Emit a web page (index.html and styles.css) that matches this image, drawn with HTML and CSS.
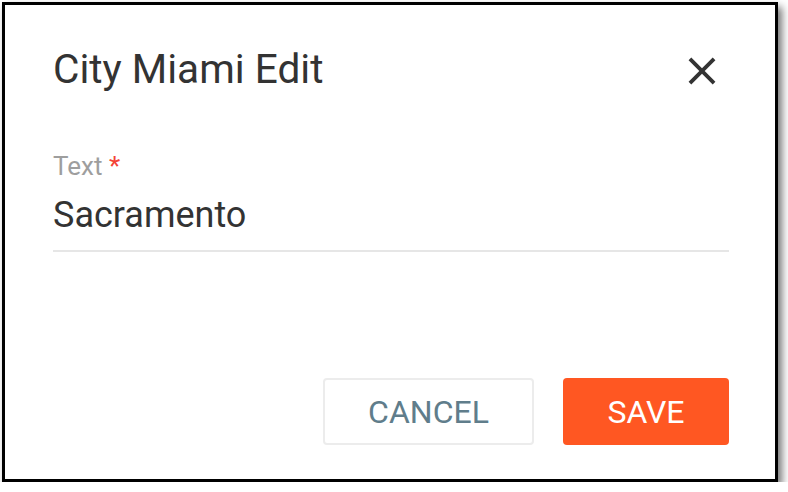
FILE: index.html
```html
<!DOCTYPE html>
<html lang="en">
<head>
<meta charset="utf-8">
<title>City Miami Edit</title>
<link rel="stylesheet" href="styles.css">
</head>
<body>
<div class="frame">
  <div class="header">
    <h2 class="title">City Miami Edit</h2>
    <button class="close" type="button" aria-label="Close">
      <svg viewBox="0 0 24 24" width="46" height="46"><path d="M19 6.41L17.59 5 12 10.59 6.41 5 5 6.41 10.59 12 5 17.59 6.41 19 12 13.41 17.59 19 19 17.59 13.41 12z"/></svg>
    </button>
  </div>
  <div class="body">
    <div class="field">
      <label class="label">Text <span class="req">*</span></label>
      <div class="input">Sacramento</div>
    </div>
    <div class="actions">
      <button class="btn btn-cancel" type="button">CANCEL</button>
      <button class="btn btn-save" type="button">SAVE</button>
    </div>
  </div>
</div>
</body>
</html>
```

FILE: styles.css
```css
html, body {
  margin: 0;
  padding: 0;
  background: #ffffff;
}
body {
  font-family: Roboto, "Liberation Sans", Arial, sans-serif;
}
.frame {
  box-sizing: border-box;
  margin: 2px 0 0 2px;
  width: 776px;
  height: 480px;
  border: 3px solid #000;
  background: #fff;
  box-shadow: 4px 5px 8px rgba(0, 0, 0, 0.55);
}
.header {
  display: flex;
  align-items: center;
  justify-content: space-between;
  margin-top: 39px;
  padding: 0 50px 0 48px;
}
.title {
  margin: 0;
  font-size: 40.6px;
  line-height: 48px;
  font-weight: 400;
  color: #333;
}
.close {
  display: flex;
  margin: 4px 0 0 0;
  padding: 0;
  border: 0;
  background: none;
}
.close svg {
  fill: #333;
}
.body {
  padding: 0 46px 0 48px;
}
.field {
  margin-top: 57px;
  display: flex;
  flex-direction: column;
}
.label {
  font-size: 26px;
  line-height: 30px;
  color: #9e9e9e;
}
.req {
  color: #f44336;
}
.input {
  margin-top: 13px;
  font-size: 36px;
  line-height: 42px;
  color: #333;
  padding-bottom: 14px;
  border-bottom: 2px solid #e6e6e6;
}
.actions {
  display: flex;
  justify-content: flex-end;
  gap: 29px;
  margin-top: 126px;
}
.btn {
  box-sizing: border-box;
  height: 67px;
  border-radius: 4px;
  font-family: Roboto, "Liberation Sans", Arial, sans-serif;
  font-size: 32px;
  font-weight: 400;
  padding: 0;
}
.btn-cancel {
  width: 211px;
  background: #fff;
  border: 2px solid #ececec;
  color: #607d8b;
}
.btn-save {
  width: 166px;
  background: #ff5722;
  border: 0;
  color: #fff;
}
```
